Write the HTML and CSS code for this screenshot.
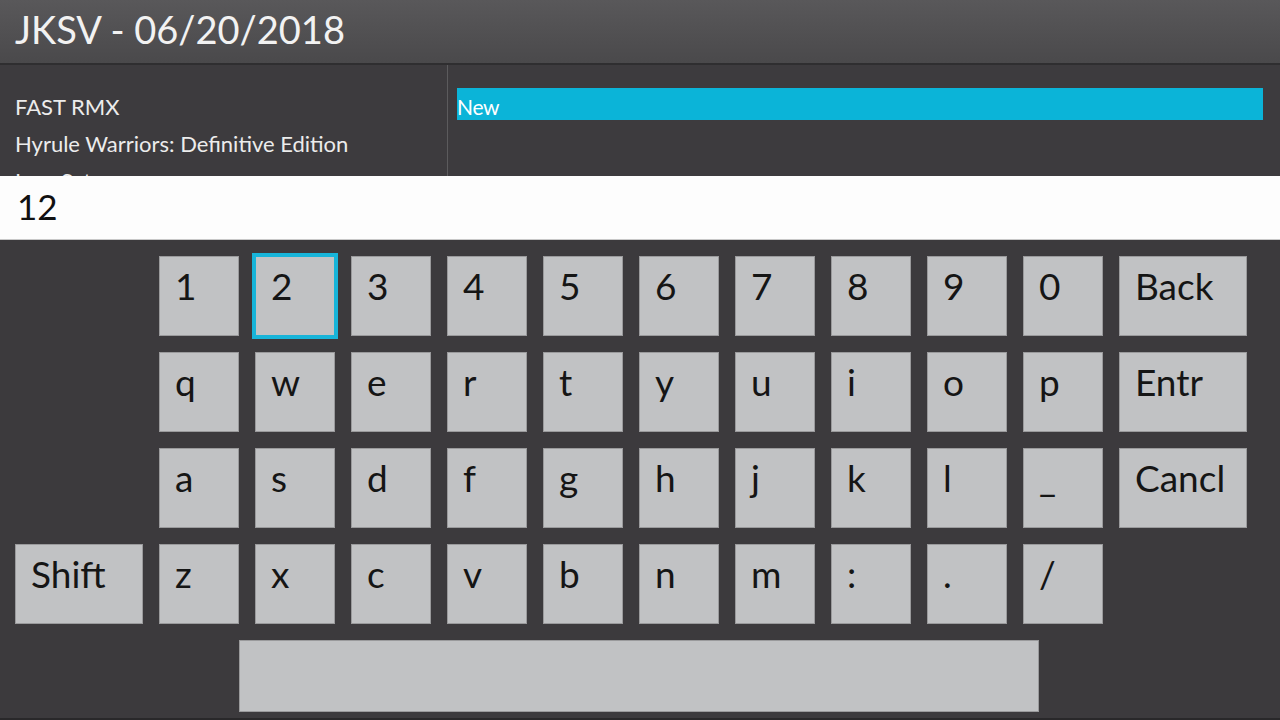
FILE: index.html
```html
<!DOCTYPE html>
<html lang="en">
<head>
<meta charset="utf-8">
<title>JKSV</title>
<link rel="stylesheet" href="styles.css">
</head>
<body>
<div class="app">
  <header class="title-bar">JKSV - 06/20/2018</header>
  <main class="panes">
    <section class="titles">
      <ul class="title-list">
        <li>FAST RMX</li>
        <li>Hyrule Warriors: Definitive Edition</li>
        <li>Lam Saturns</li>
      </ul>
    </section>
    <section class="saves">
      <div class="save-item selected">New</div>
    </section>
  </main>

  <div class="keyboard">
    <div class="input-line">12</div>
    <div class="keys">
      <div class="row">
        <span class="spacer"></span>
        <span class="key">1</span>
        <span class="key focused">2</span>
        <span class="key">3</span>
        <span class="key">4</span>
        <span class="key">5</span>
        <span class="key">6</span>
        <span class="key">7</span>
        <span class="key">8</span>
        <span class="key">9</span>
        <span class="key">0</span>
        <span class="key wide">Back</span>
      </div>
      <div class="row">
        <span class="spacer"></span>
        <span class="key">q</span>
        <span class="key">w</span>
        <span class="key">e</span>
        <span class="key">r</span>
        <span class="key">t</span>
        <span class="key">y</span>
        <span class="key">u</span>
        <span class="key">i</span>
        <span class="key">o</span>
        <span class="key">p</span>
        <span class="key wide">Entr</span>
      </div>
      <div class="row">
        <span class="spacer"></span>
        <span class="key">a</span>
        <span class="key">s</span>
        <span class="key">d</span>
        <span class="key">f</span>
        <span class="key">g</span>
        <span class="key">h</span>
        <span class="key">j</span>
        <span class="key">k</span>
        <span class="key">l</span>
        <span class="key">_</span>
        <span class="key wide">Cancl</span>
      </div>
      <div class="row">
        <span class="key wide">Shift</span>
        <span class="key">z</span>
        <span class="key">x</span>
        <span class="key">c</span>
        <span class="key">v</span>
        <span class="key">b</span>
        <span class="key">n</span>
        <span class="key">m</span>
        <span class="key">:</span>
        <span class="key">.</span>
        <span class="key">/</span>
      </div>
      <div class="row space-row">
        <span class="key space"></span>
      </div>
    </div>
  </div>
</div>
</body>
</html>
```

FILE: styles.css
```css
* { box-sizing: border-box; }

html, body {
  margin: 0;
  padding: 0;
  width: 1280px;
  height: 720px;
  overflow: hidden;
  background: #3d3b3e;
  font-family: "Lato", "Noto Sans", sans-serif;
}

.app {
  position: relative;
  width: 1280px;
  height: 720px;
  display: flex;
  flex-direction: column;
}

.title-bar {
  height: 65px;
  padding: 10px 0 0 15px;
  font-size: 38px;
  line-height: 1;
  color: #f2f2f2;
  background: linear-gradient(#59585a, #4a494b);
  border-bottom: 2px solid #2f2e30;
}

.panes {
  flex: 1;
  display: flex;
  overflow: hidden;
}

.titles {
  width: 448px;
  border-right: 1px solid #5c5b5d;
  padding: 23px 0 0 15px;
}

.title-list {
  list-style: none;
  margin: 0;
  padding: 0;
}

.title-list li {
  font-size: 22px;
  line-height: 37px;
  height: 37px;
  color: #ececec;
  white-space: nowrap;
}

.saves {
  flex: 1;
  padding: 23px 17px 0 9px;
}

.save-item {
  height: 32px;
  padding-top: 6px;
  font-size: 21px;
  line-height: 26px;
  color: #ffffff;
  letter-spacing: -0.3px;
}

.save-item.selected {
  background: #0bb4d8;
}

/* on-screen keyboard overlay */
.keyboard {
  position: absolute;
  left: 0;
  right: 0;
  top: 176px;
  bottom: 0;
  background: #3c3a3d;
  display: flex;
  flex-direction: column;
  border-bottom: 2px solid #29282a;
}

.input-line {
  height: 64px;
  padding: 13px 0 0 17px;
  font-size: 35px;
  line-height: 1;
  color: #111111;
  background: #fdfdfd;
  border-bottom: 1px solid #c8c8c8;
}

.keys {
  padding: 16px 0 0 15px;
  display: flex;
  flex-direction: column;
  gap: 16px;
}

.row {
  display: flex;
  gap: 16px;
  height: 80px;
}

.spacer {
  width: 128px;
  flex: none;
}

.key {
  flex: none;
  width: 80px;
  height: 80px;
  background: #c1c2c4;
  border: 1px solid #9a9a9c;
  padding: 10px 0 0 15px;
  font-size: 37px;
  line-height: 1;
  color: #151515;
}

.key.wide {
  width: 128px;
}

.key.focused {
  border-color: #17b4d9;
  outline: 3px solid #17b4d9;
  outline-offset: 0;
}

.space-row {
  height: 72px;
  padding-left: 224px;
}

.key.space {
  width: 800px;
  height: 72px;
}
```
